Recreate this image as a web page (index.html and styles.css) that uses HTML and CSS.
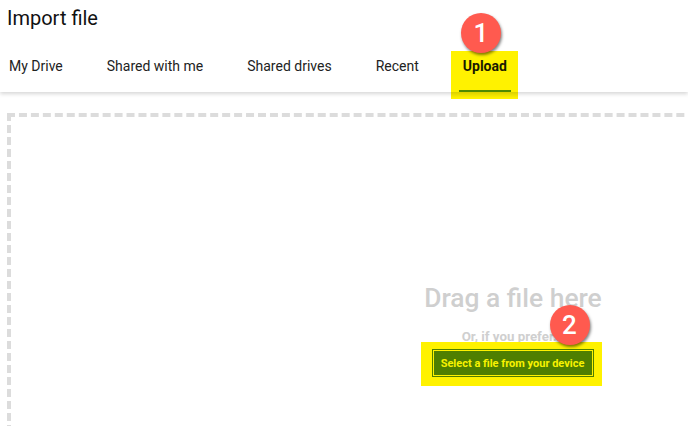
FILE: index.html
```html
<!DOCTYPE html>
<html lang="en">
<head>
<meta charset="utf-8">
<title>Import file</title>
<link rel="stylesheet" href="styles.css">
</head>
<body>
<header class="header">
  <h1 class="title">Import file</h1>
  <nav class="tabs">
    <a class="tab">My Drive</a>
    <a class="tab">Shared with me</a>
    <a class="tab">Shared drives</a>
    <a class="tab">Recent</a>
    <a class="tab tab-active">Upload<span class="badge badge-one">1</span></a>
  </nav>
</header>
<main class="page">
  <section class="dropzone">
    <div class="drag">Drag a file here</div>
    <div class="prefer">Or, if you prefer...</div>
    <div class="highlight">
      <button class="select">Select a file from your device</button>
      <span class="badge badge-two">2</span>
    </div>
  </section>
</main>
</body>
</html>
```
FILE: styles.css
```css
* { box-sizing: border-box; }
html, body { margin: 0; height: 100%; }
body {
  width: 688px;
  height: 426px;
  overflow: hidden;
  background: #fff;
  font-family: Roboto, "Liberation Sans", sans-serif;
  color: #202020;
}
.header {
  height: 92px;
  background: #fff;
  box-shadow: 0 2px 4px rgba(0, 0, 0, 0.16);
  position: relative;
  z-index: 0;
}
.title {
  margin: 0;
  padding: 6px 0 0 7px;
  height: 51px;
  font-size: 20px;
  line-height: 24px;
  font-weight: 400;
  color: #111;
}
.tabs {
  display: flex;
  height: 41px;
  padding-left: 9px;
  gap: 44px;
}
.tab {
  font-size: 14px;
  line-height: 30px;
  color: #222;
  white-space: nowrap;
}
.tab-active {
  position: relative;
  font-weight: 700;
  color: #1a1a00;
}
.tab-active::before {
  content: "";
  position: absolute;
  left: -12px;
  right: -11px;
  top: 0;
  height: 48px;
  background: linear-gradient(transparent 41px, rgba(0, 0, 0, 0.14) 41px, transparent 47px), #fff200;
  z-index: -1;
}
.tab-active::after {
  content: "";
  position: absolute;
  left: -4px;
  right: -4px;
  top: 39px;
  height: 2px;
  background: #4f8a00;
}
.badge {
  position: absolute;
  width: 40px;
  height: 40px;
  border-radius: 50%;
  background: #ff5a4f;
  color: #fff;
  font-size: 26px;
  font-weight: 500;
  line-height: 40px;
  text-align: center;
  box-shadow: 1px 2px 3px rgba(0, 0, 0, 0.5);
}
.badge-one { left: -2px; top: -38px; }
.badge-two { right: 12px; top: -37px; }
.page { padding: 21px 0 0 7px; }
.dropzone {
  width: 1012px;
  height: 500px;
  border: 4px dashed #dcdcdc;
  display: flex;
  flex-direction: column;
  align-items: center;
  padding-top: 163px;
}
.drag {
  font-size: 26.4px;
  line-height: 36px;
  font-weight: 500;
  color: #cfcfcf;
}
.prefer {
  margin-top: 13px;
  font-size: 13.3px;
  line-height: 16px;
  font-weight: 700;
  color: #cfcfcf;
}
.highlight {
  position: relative;
  padding: 7px 8px 9px 11px;
  background: #fff200;
  margin: -3px 4px 0 0;
}
.select {
  display: block;
  width: 162px;
  height: 28px;
  padding: 0;
  border: 1px solid #4f7f00;
  outline: 1px solid #fff200;
  outline-offset: -2px;
  background: #4f7f00;
  color: #f8f200;
  font-family: inherit;
  font-size: 11px;
  font-weight: 700;
}
```
